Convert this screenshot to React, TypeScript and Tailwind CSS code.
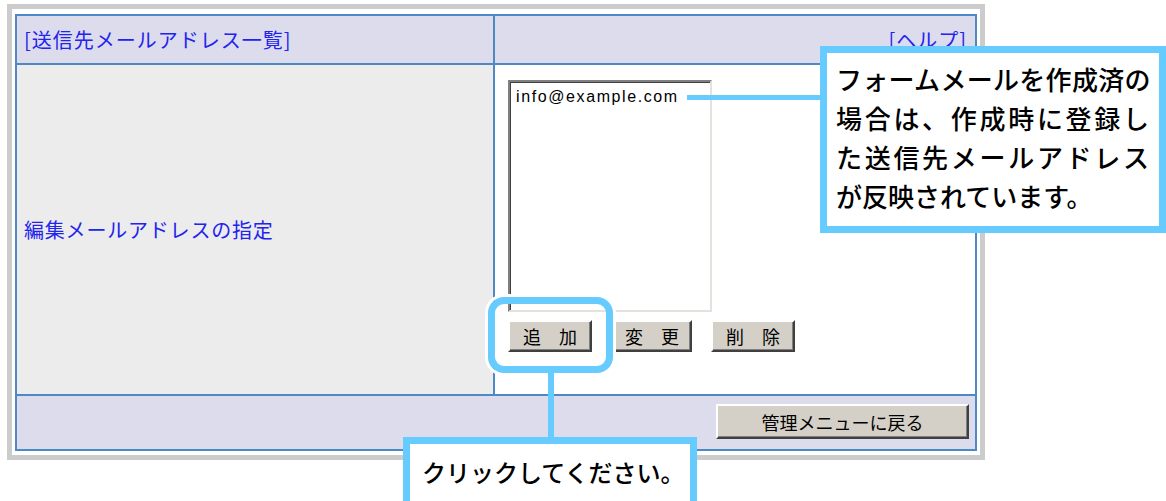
import React from 'react';

// Windows-classic raised button
const RaisedButton: React.FC<{ label: string; className?: string }> = ({ label, className }) => (
    <button
        className={`flex items-center justify-center bg-[#d4d0c8] border-2 border-t-white border-l-white border-r-[#404040] border-b-[#404040] shadow-[inset_-1px_-1px_0_#808080] text-black leading-none ${className ?? ''}`}
    >
        {label}
    </button>
);

const App: React.FC = () => {
    return (
        <div className="relative w-[1166px] h-[501px] overflow-hidden bg-white font-['Noto_Sans_CJK_JP',sans-serif]">
            {/* Grey outer frame */}
            <div className="ml-[7px] mt-[4px] w-[978px] h-[456px] border-[5px] border-[#cccccc] bg-white pt-[5px] px-[3px] pb-[4px]">
                <div className="flex h-full flex-col border-2 border-[#4d89c4]">
                    {/* Header row */}
                    <div className="flex h-[49px] border-b-2 border-[#4d89c4] bg-[#dcdcec] text-[20px] text-[#2323f0]">
                        <div className="flex w-[478px] items-center border-r-2 border-[#4d89c4] pl-[7px] tracking-[1px]">
                            [送信先メールアドレス一覧]
                        </div>
                        <div className="flex flex-1 items-center justify-end pr-[8px] tracking-[1px]">[ヘルプ]</div>
                    </div>

                    {/* Body row */}
                    <div className="flex h-[331px] border-b-2 border-[#4d89c4]">
                        <div className="flex w-[478px] items-center border-r-2 border-[#4d89c4] bg-[#ececec] pl-[7px] text-[20px] tracking-[0.8px] text-[#2323f0]">
                            編集メールアドレスの指定
                        </div>
                        <div className="flex-1 bg-white pl-[13px] pt-[15px]">
                            <div className="h-[232px] w-[204px] border-2 border-t-[#808080] border-l-[#808080] border-r-[#e4e2dc] border-b-[#e4e2dc] shadow-[inset_1px_1px_0_#404040] bg-white pl-[6px] pt-[6px] font-['Liberation_Sans',sans-serif] text-[16px] leading-[18px] tracking-[1.6px] text-black">
                                info@example.com
                            </div>
                            <div className="mt-[8px] flex">
                                <RaisedButton label="追　加" className="h-[32px] w-[84px] text-[18px]" />
                                <RaisedButton label="変　更" className="ml-[20px] h-[32px] w-[80px] text-[18px]" />
                                <RaisedButton label="削　除" className="ml-[19px] h-[32px] w-[84px] text-[18px]" />
                            </div>
                        </div>
                    </div>

                    {/* Footer row */}
                    <div className="flex flex-1 justify-end bg-[#dcdcec] pr-[6px] pt-[8px]">
                        <RaisedButton label="管理メニューに戻る" className="h-[35px] w-[253px] text-[18px]" />
                    </div>
                </div>
            </div>

            {/* Callout: address note */}
            <div className="absolute left-[687px] top-[95px] h-[5px] w-[136px] bg-[#66ccff]" />
            <div className="absolute left-[820px] top-[46px] h-[187px] w-[346px] border-[7px] border-[#66ccff] bg-white pl-[9px] pt-[6px] text-[26px] font-medium leading-[39px] text-black">
                <div className="whitespace-nowrap tracking-[0.3px]">フォームメールを作成済の</div>
                <div className="whitespace-nowrap tracking-[2.7px]">場合は、作成時に登録し</div>
                <div className="whitespace-nowrap tracking-[2.7px]">た送信先メールアドレス</div>
                <div className="whitespace-nowrap">が反映されています。</div>
            </div>

            {/* Callout: click the add button */}
            <div className="absolute left-[488px] top-[297px] h-[76px] w-[125px] rounded-[16px] border-[7px] border-[#66ccff] shadow-[0_0_0_3px_white]" />
            <div className="absolute left-[548px] top-[373px] h-[66px] w-[6px] bg-[#66ccff]" />
            <div className="absolute left-[403px] top-[437px] h-[72px] w-[294px] border-[7px] border-[#66ccff] bg-white pl-[12px] pt-[8px] text-[24px] font-medium leading-[40px] text-black whitespace-nowrap">
                クリックしてください。
            </div>
        </div>
    );
};

export default App;
